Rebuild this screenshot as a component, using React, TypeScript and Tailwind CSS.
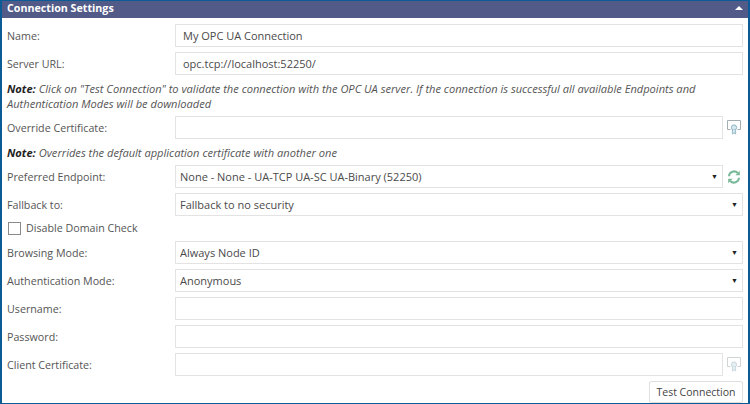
import React from "react";

function Cert({ dim }: { dim?: boolean }) {
  const c = dim ? "#cfd5d6" : "#a3aeb0";
  const s = dim ? "#c5d6dc" : "#8db4c4";
  const f = dim ? "#e6eff2" : "#d6e8ee";
  return (
    <svg width="14" height="15" viewBox="0 0 14 15" fill="none" className="block">
      <path d="M3.5 9.5H0.5V0.5H13.5V9.5H10.5" stroke={c} strokeWidth="1" />
      <circle cx="7" cy="7.5" r="2.6" fill={f} stroke={s} strokeWidth="1" />
      <path d="M5.4 9.8V14L7 12.8L8.6 14V9.8" fill={f} stroke={s} strokeWidth="0.9" />
    </svg>
  );
}

function Refresh() {
  return (
    <svg width="14" height="14" viewBox="0 0 14 14" fill="none" className="block">
      <path d="M2 6.2A5 5 0 0 1 10.8 3.2" stroke="#7ab89a" strokeWidth="2" />
      <path d="M12 7.8A5 5 0 0 1 3.2 10.8" stroke="#7ab89a" strokeWidth="2" />
      <path d="M12.8 0.8V5.2H8.4Z" fill="#7ab89a" />
      <path d="M1.2 13.2V8.8H5.6Z" fill="#7ab89a" />
    </svg>
  );
}

function Field({ value, select, w }: { value?: string; select?: boolean; w?: string }) {
  return (
    <div className={`h-[23px] border border-[#e3e3e3] bg-white flex items-center justify-between text-[11px] text-[#4a4a4a] ${select ? "pl-[4px] pr-[4px]" : "pl-[7px]"} ${w ?? "w-[568px]"}`}>
      <span>{value}</span>
      {select && <span className="text-[#222] text-[7px] leading-none">▼</span>}
    </div>
  );
}

function Row({ label, children }: { label: string; children: React.ReactNode }) {
  return (
    <div className="flex items-center h-[23px]">
      <div className="w-[168px] shrink-0 text-[#555] text-[10.7px] pt-[1px]">{label}</div>
      {children}
    </div>
  );
}

export default function App() {
  return (
    <div className="w-[750px] h-[404px] overflow-hidden bg-white border-x-2 border-y border-[#0b5c96] text-[11px] leading-[15px]" style={{ fontFamily: '"Open Sans", "Noto Sans", sans-serif' }}>
      <div className="h-[17px] bg-[#525a88] flex items-center justify-between pl-[5px] pr-[5px] pb-[3px] text-white font-bold text-[10.7px]">
        <span>Connection Settings</span>
        <span className="w-0 h-0 border-x-[4px] border-x-transparent border-b-[4px] border-b-white" />
      </div>
      <div className="pl-[5px] pt-[6px] flex flex-col">
        <Row label="Name:"><Field value="My OPC UA Connection" /></Row>
        <div className="h-[5px]" />
        <Row label="Server URL:"><Field value="opc.tcp://localhost:52250/" /></Row>
        <div className="mt-[6px] italic text-[#555] text-[11.1px] w-[735px]">
          <b className="text-[#222] mr-[3px]">Note:</b><span>Click on "Test Connection" to validate the connection with the OPC UA server. If the connection is successful all available Endpoints and Authentication Modes will be downloaded</span>
        </div>
        <div className="h-[5px]" />
        <Row label="Override Certificate:">
          <Field w="w-[548px]" />
          <span className="ml-[4px]"><Cert /></span>
        </Row>
        <div className="mt-[6px] italic text-[#555] text-[11.1px]"><b className="text-[#222] mr-[3px]">Note:</b><span>Overrides the default application certificate with another one</span></div>
        <div className="h-[5px]" />
        <Row label="Preferred Endpoint:">
          <Field select w="w-[548px]" value="None - None - UA-TCP UA-SC UA-Binary (52250)" />
          <span className="ml-[4px]"><Refresh /></span>
        </Row>
        <div className="h-[5px]" />
        <Row label="Fallback to:"><Field select value="Fallback to no security" /></Row>
        <div className="h-[22px] flex items-center mt-[1px] text-[#555] text-[10.7px]">
          <span className="w-[13px] h-[13px] border border-[#8a8a8a] bg-white mr-[5px] ml-[1px]" />
          Disable Domain Check
        </div>
        <div className="h-[2px]" />
        <Row label="Browsing Mode:"><Field select value="Always Node ID" /></Row>
        <div className="h-[5px]" />
        <Row label="Authentication Mode:"><Field select value="Anonymous" /></Row>
        <div className="h-[5px]" />
        <Row label="Username:"><Field /></Row>
        <div className="h-[5px]" />
        <Row label="Password:"><Field /></Row>
        <div className="h-[5px]" />
        <Row label="Client Certificate:">
          <Field w="w-[548px]" />
          <span className="ml-[4px]"><Cert dim /></span>
        </Row>
        <div className="flex justify-end w-[736px] mt-[5px]">
          <div className="h-[22px] w-[94px] pt-[1px] border border-[#e0e0e0] rounded-[2px] flex items-center justify-center text-[#444] text-[10.5px]">Test Connection</div>
        </div>
      </div>
    </div>
  );
}
